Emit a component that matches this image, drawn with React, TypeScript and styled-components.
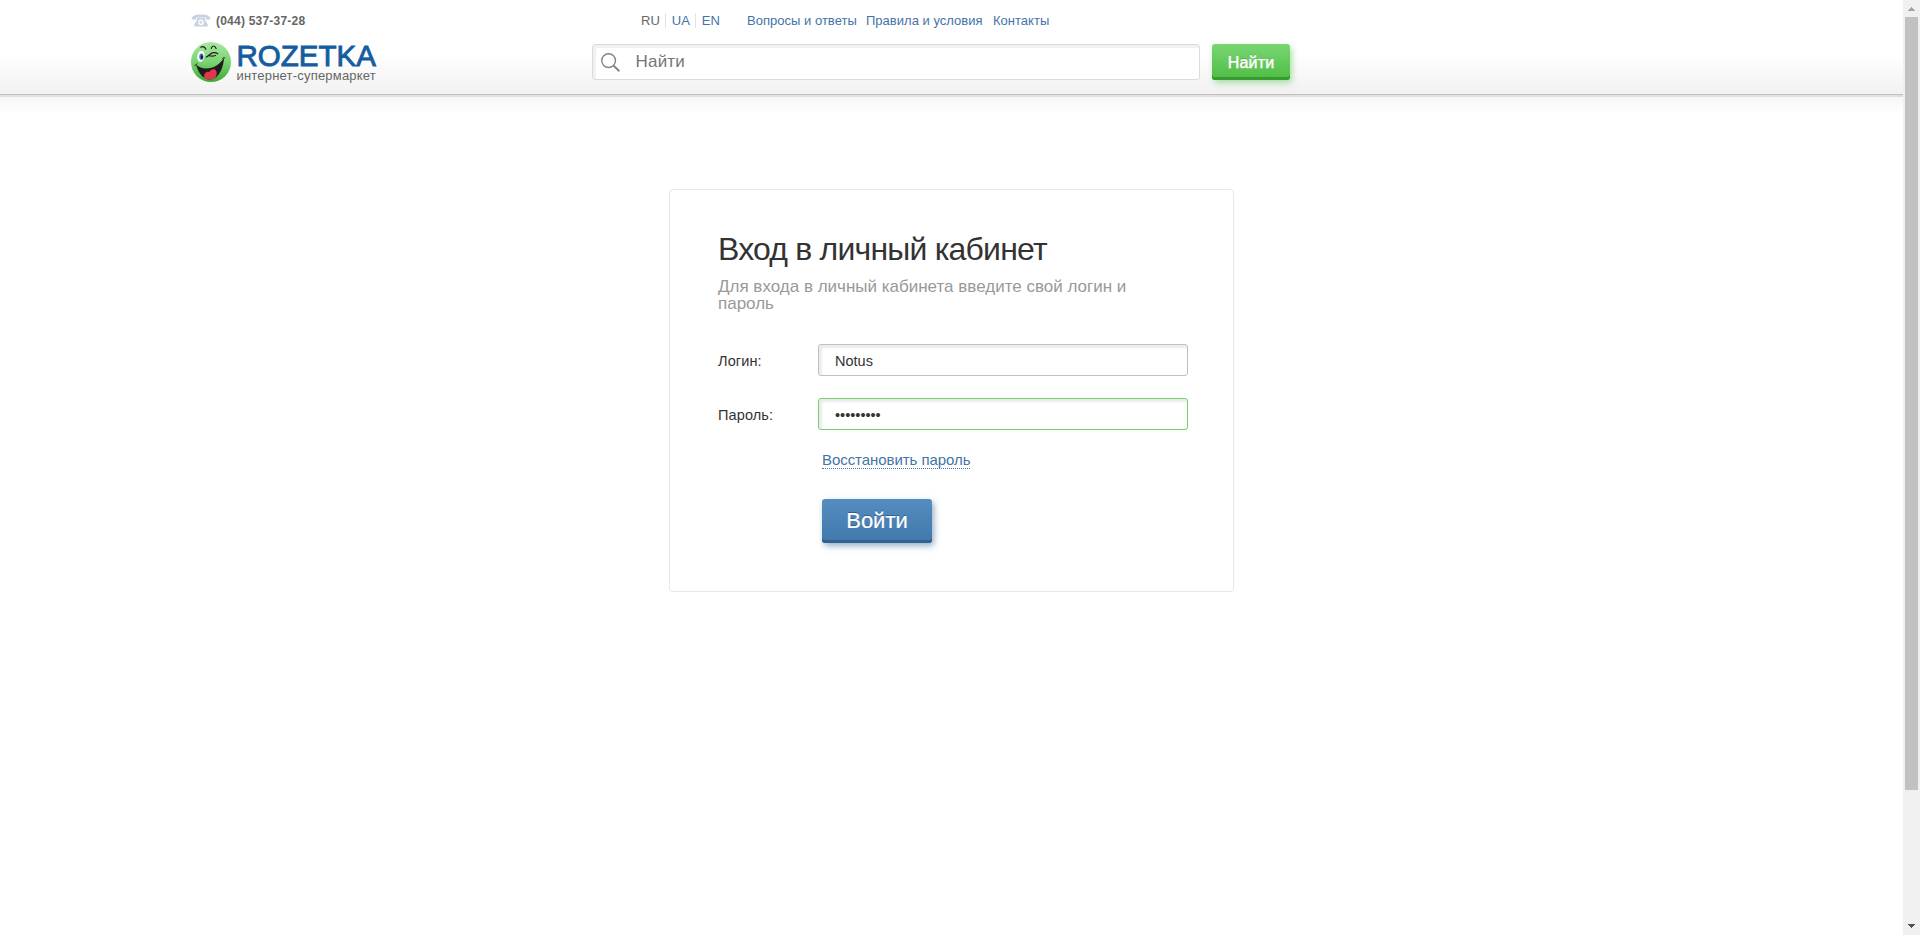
import React from "react";
import styled, { createGlobalStyle } from "styled-components";

const GlobalStyle = createGlobalStyle`
  *, *::before, *::after { box-sizing: border-box; }
  html, body { margin: 0; padding: 0; background: #fff; overflow: hidden; }
  body { font-family: "Liberation Sans", Arial, sans-serif; color: #333; }
  a { text-decoration: none; color: #4374a8; }
`;

const Screen = styled.div`
  display: flex;
  height: 935px;
`;

const Page = styled.div`
  flex: 1;
`;

const Header = styled.header`
  display: flex;
  height: 97px;
  padding-left: 190px;
  background: linear-gradient(#fff 55px, #f1f1f1 94px);
  border-bottom: 2px solid #e0e0e0;
  box-shadow: inset 0 -1px #c1c1c1;
`;

const HeaderShade = styled.div`
  height: 16px;
  background: linear-gradient(#f7f7f7, #fff);
`;

const Brand = styled.div`
  width: 402px;
  padding-top: 13px;
`;

const Phone = styled.div`
  display: flex;
  align-items: center;
  height: 15px;
  gap: 5px;
  padding-left: 1px;
  font-size: 12px;
  font-weight: bold;
  letter-spacing: 0.22px;
  color: #666;
`;

const Logo = styled.a`
  display: flex;
  gap: 4.5px;
  margin-top: 13px;
`;

const LogoText = styled.div`
  display: flex;
  flex-direction: column;
  white-space: nowrap;
`;

const LogoName = styled.span`
  height: 27px;
  line-height: 30px;
  font-size: 29.5px;
  color: #155c9f;
  -webkit-text-stroke: 0.9px #155c9f;
`;

const LogoTag = styled.span`
  line-height: 15px;
  font-size: 13px;
  letter-spacing: 0.2px;
  color: #666;
`;

const Tools = styled.div`
  padding-top: 13px;
`;

const TopNav = styled.nav`
  display: flex;
  align-items: center;
  height: 15px;
  padding-left: 49px;
  font-size: 13px;
  white-space: nowrap;
`;

const Langs = styled.div`
  display: flex;
  width: 106px;
`;

const Lang = styled.a<{ $active?: boolean }>`
  padding-right: 5.5px;
  margin-right: 5.5px;
  line-height: 15px;
  color: ${(p) => (p.$active ? "#666" : "#4374a8")};
  &:not(:last-child) { border-right: 1px solid #e3e3e3; }
`;

const NavLink = styled.a<{ $w: number }>`
  width: ${(p) => p.$w}px;
  letter-spacing: 0.02px;
`;

const SearchForm = styled.div`
  display: flex;
  gap: 12px;
  margin-top: 16px;
`;

const SearchBox = styled.div`
  display: flex;
  width: 608px;
  height: 36px;
  padding: 8px 0 0 8px;
  gap: 14.5px;
  background: #fff;
  border: 1px solid #dbdbdb;
  border-radius: 3px;
  box-shadow: inset 3px 3px #f1f1f1;
  font-size: 17px;
  letter-spacing: 0.2px;
  line-height: 18px;
  color: #757575;
`;

const Button = styled.button<{ $green?: boolean }>`
  width: ${(p) => (p.$green ? 78 : 110)}px;
  height: ${(p) => (p.$green ? 36 : 44)}px;
  padding: ${(p) => (p.$green ? 1 : 0)}px 0 0;
  border: 0;
  border-radius: 3px;
  font-family: inherit;
  font-size: ${(p) => (p.$green ? 16 : 22)}px;
  letter-spacing: ${(p) => (p.$green ? 0.2 : 0)}px;
  -webkit-text-stroke: ${(p) => (p.$green ? 0.5 : 0.2)}px #fff;
  color: #fff;
  background: ${(p) => (p.$green ? "linear-gradient(#79d672, #4dbd43)" : "linear-gradient(#568dc0, #4078ab)")};
  text-shadow: 0 -1px ${(p) => (p.$green ? "#3d9a36" : "#2f608f")};
  box-shadow: inset 0 -3px ${(p) => (p.$green ? "#379a30" : "#306190")},
    2px 3px 6px ${(p) => (p.$green ? "rgba(90,200,80,.5)" : "rgba(48,97,144,.5)")};
`;

const Card = styled.main`
  width: 565px;
  height: 403px;
  margin: 76px 0 0 669px;
  padding: 39px 0 0 48px;
  border: 1px solid #e8e8e8;
  border-radius: 4px;
`;

const Title = styled.h1`
  margin: 0;
  font-size: 32px;
  line-height: 40px;
  font-weight: normal;
  letter-spacing: -0.8px;
  color: #333;
`;

const Lead = styled.p`
  width: 420px;
  margin: 9px 0 0;
  font-size: 17px;
  line-height: 17px;
  color: #999;
`;

const Row = styled.div<{ $gap: number }>`
  display: flex;
  align-items: center;
  height: 32px;
  margin-top: ${(p) => p.$gap}px;
`;

const Label = styled.label`
  width: 100px;
  padding-top: 2px;
  font-size: 14.5px;
  letter-spacing: 0.12px;
`;

const Field = styled.div<{ $focus?: boolean }>`
  width: 370px;
  height: 32px;
  padding-left: 16px;
  font-size: 14.5px;
  line-height: 32px;
  background: #fff;
  border: 1px solid ${(p) => (p.$focus ? "#72d06b" : "#bfbfca")};
  border-radius: 3px;
  box-shadow: inset 3px 3px 2px #ececec;
`;

const Actions = styled.div`
  display: flex;
  flex-direction: column;
  align-items: flex-start;
  gap: 30px;
  padding: 21px 0 0 104px;
`;

const Restore = styled.a`
  font-size: 15px;
  line-height: 17px;
  letter-spacing: -0.06px;
  border-bottom: 1px dotted #3e77aa;
`;

const Scrollbar = styled.div`
  display: flex;
  flex-direction: column;
  justify-content: space-between;
  width: 17px;
  background: #f0f0f0;
`;

const Thumb = styled.div`
  width: 13px;
  height: 773px;
  margin: 0 2px auto;
  background: #c1c1c1;
`;

const Arrow = styled.svg`
  display: block;
  width: 17px;
  height: 17px;
`;

const PhoneIcon = () => (
  <svg width="20" height="13" viewBox="0 0 20 13">
    <path d="M.6 5.2C.3 1.700 5 .5 10 .5s9.700 1.200 9.400 4.700l-4.100.6-.7-2.300C12 2.700 8 2.700 5.400 3.500l-.7 2.300z" fill="#c8d3e0" />
    <path fillRule="evenodd" d="M6.200 3.600h7.600v1.600l3 5.500v1.700H3.200v-1.700l3-5.500zM10 5.400a2.900 2.900 0 1 0 0 5.800 2.900 2.900 0 0 0 0-5.800z" fill="#c8d3e0" />
    <circle cx="10" cy="8.300" r="1.700" fill="#d5dee8" />
  </svg>
);

const Smile = () => (
  <svg width="42" height="42" viewBox="0 0 42 42">
    <defs>
      <linearGradient id="face" x1="0" y1="0" x2="0" y2="1">
        <stop offset="0" stopColor="#a9e8a2" />
        <stop offset=".5" stopColor="#7ad372" />
        <stop offset="1" stopColor="#3aa935" />
      </linearGradient>
      <clipPath id="mouth"><path d="M6 23.500c3 2.800 6 4 10.500 4 7 0 13-4 17.500-10.500-.5 10-5.500 21.500-14 21.500C12.500 38.500 8 31 6 23.500z" /></clipPath>
    </defs>
    <circle cx="21" cy="21" r="20" fill="url(#face)" />
    <ellipse cx="11" cy="15.200" rx="3.600" ry="5.600" fill="#fff" transform="rotate(10 11 15.200)" />
    <ellipse cx="11.400" cy="15.700" rx="2.100" ry="3.300" fill="#3472b5" />
    <ellipse cx="11.800" cy="16" rx="1" ry="1.700" fill="#111" />
    <path d="M6 23.500c3 2.800 6 4 10.500 4 7 0 13-4 17.500-10.500-.5 10-5.500 21.500-14 21.500C12.500 38.500 8 31 6 23.500z" fill="#201b1c" />
    <g clipPath="url(#mouth)">
      <path d="M14 39c-.5-6 1.500-9 5.500-8 1-3 5-3.500 6.500-1.500 2 3-.5 10-5 10z" fill="#e2374a" />
    </g>
    <path d="M5 24.300c.8-.2 1.500-.7 1.900-1.500M32.600 17.300c.6-.7 1.400-.8 2.300-.4" stroke="#201b1c" strokeWidth="1" fill="none" strokeLinecap="round" />
    <path d="M10.800 6.200c2-1.200 4-.4 5 2M21.300 7.300c.8-3 3.400-3.200 4.800.2M16.200 16c2.500-.6 4-3.800 7-4.300 2-.3 3.300.2 4.600 1M19.500 14.800c2 .7 4 .4 6-.3" stroke="#201b1c" strokeWidth="1.200" fill="none" strokeLinecap="round" />
  </svg>
);

const SearchIcon = () => (
  <svg width="20" height="20" viewBox="0 0 20 20" fill="none" stroke="#7c868d">
    <circle cx="7.600" cy="7.600" r="6.900" strokeWidth="1.400" />
    <path d="M12.700 12.700l5.700 5.500" strokeWidth="1.900" />
  </svg>
);

export default function App() {
  return (
    <>
      <GlobalStyle />
      <Screen>
        <Page>
          <Header>
            <Brand>
              <Phone><PhoneIcon />(044) 537-37-28</Phone>
              <Logo href="#">
                <Smile />
                <LogoText>
                  <LogoName>ROZETKA</LogoName>
                  <LogoTag>интернет-супермаркет</LogoTag>
                </LogoText>
              </Logo>
            </Brand>
            <Tools>
              <TopNav>
                <Langs>
                  <Lang $active>RU</Lang>
                  <Lang href="#">UA</Lang>
                  <Lang href="#">EN</Lang>
                </Langs>
                <NavLink href="#" $w={119}>Вопросы и ответы</NavLink>
                <NavLink href="#" $w={127}>Правила и условия</NavLink>
                <NavLink href="#" $w={60}>Контакты</NavLink>
              </TopNav>
              <SearchForm>
                <SearchBox><SearchIcon />Найти</SearchBox>
                <Button $green>Найти</Button>
              </SearchForm>
            </Tools>
          </Header>
          <HeaderShade />
          <Card>
            <Title>Вход в личный кабинет</Title>
            <Lead>Для входа в личный кабинета введите свой логин и пароль</Lead>
            <Row $gap={32}>
              <Label>Логин:</Label>
              <Field>Notus</Field>
            </Row>
            <Row $gap={22}>
              <Label>Пароль:</Label>
              <Field $focus>•••••••••</Field>
            </Row>
            <Actions>
              <Restore href="#">Восстановить пароль</Restore>
              <Button>Войти</Button>
            </Actions>
          </Card>
        </Page>
        <Scrollbar>
          <Arrow viewBox="0 0 17 17" shapeRendering="crispEdges"><path d="M5 11h7v-1h-1V9h-1V8H9V7H8v1H7v1H6v1H5z" fill="#a3a3a3" /></Arrow>
          <Thumb />
          <Arrow viewBox="0 0 17 17" shapeRendering="crispEdges"><path d="M5 6h7v1h-1v1h-1v1H9v1H8V9H7V8H6V7H5z" fill="#505050" /></Arrow>
        </Scrollbar>
      </Screen>
    </>
  );
}
